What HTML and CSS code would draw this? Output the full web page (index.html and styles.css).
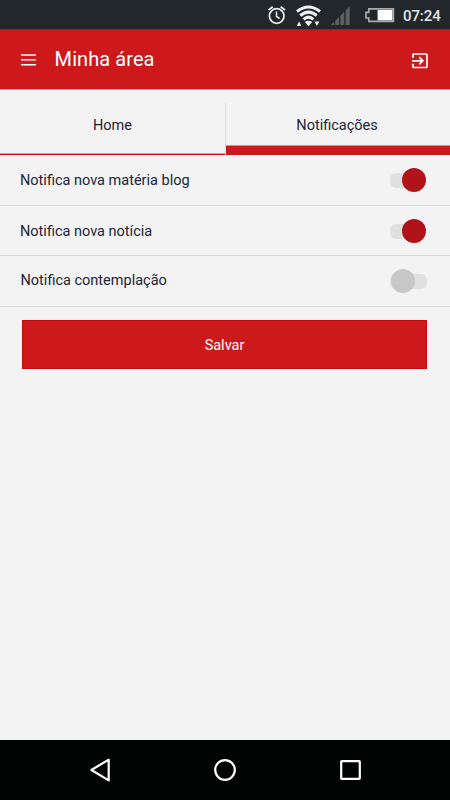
FILE: index.html
```html
<!DOCTYPE html>
<html lang="pt-BR">
<head>
<meta charset="utf-8">
<title>Minha área</title>
<link rel="stylesheet" href="styles.css">
</head>
<body>
<div class="screen">
  <div class="status">
    <svg class="alarm" width="18" height="20" viewBox="0 0 18 20" fill="none" stroke="#e9eaea">
      <circle cx="8.7" cy="11" r="7.3" stroke-width="1.8"/>
      <path d="M8.5 6.5v5l3.2 2" stroke-width="1.5"/>
      <path d="M.5 5L4.8 1.8M17 5L12.7 1.8" stroke-width="1.8"/>
    </svg>
    <svg class="wifi" width="26" height="22" viewBox="0 0 26 22">
      <g fill="none" stroke="#f0f0f0" stroke-width="3.1">
        <path d="M1 6.4Q12.5-2.4 24 6.4"/>
        <path d="M4.3 10.5Q12.5 3.7 20.7 10.5"/>
        <path d="M7.6 14.3Q12.5 10 17.4 14.3"/>
      </g>
      <path d="M8.8 17Q12.5 14.4 16.2 17L12.5 21.2ZM.8 21L3.1 16.4 5.4 21ZM18.5 16.4H23.3L20.9 21Z" fill="#f0f0f0"/>
    </svg>
    <svg class="signal" width="19" height="20" viewBox="0 0 19 20" fill="#5b6062">
      <path d="M0 19L3.3 15.7V19ZM4.3 14.7L8 11V19H4.3ZM9.3 9.7L13.2 5.8V19H9.3ZM14.7 4.3L18.7.3V19H14.7Z"/>
    </svg>
    <svg class="battery" width="30" height="15" viewBox="0 0 30 15">
      <path d="M3.8.9H28.4V13.4H3.8V10H1V4.3H3.8Z" fill="none" stroke="#a9abac" stroke-width="1.7"/>
      <path d="M12.6 2h14.8v10.3H12.6z" fill="#fff"/>
    </svg>
    <span class="time">07:24</span>
  </div>
  <header class="header">
    <svg class="menu" width="16" height="12" viewBox="0 0 16 12" stroke="#fff" stroke-width="1.4"><path d="M0 1h15M0 5.9h15M0 10.8h15"/></svg>
    <h1>Minha área</h1>
    <svg class="exit" width="16" height="16" viewBox="0 0 16 16" fill="none" stroke="#fff" stroke-width="1.7">
      <path d="M.9 4.9V2Q.9 1 1.9 1H14Q15 1 15 2V13.5Q15 14.5 14 14.5H1.9Q.9 14.5.9 13.5V10.8"/>
      <path d="M0 7.8H10.8M7.2 4.2L10.9 7.8 7.2 11.4"/>
    </svg>
  </header>
  <nav class="tabs">
    <div class="tab"><span>Home</span></div>
    <div class="tab active"><span>Notificações</span></div>
  </nav>
  <main>
    <div class="row first"><span>Notifica nova matéria blog</span><div class="switch on"><i></i></div></div>
    <div class="row second"><span>Notifica nova notícia</span><div class="switch on"><i></i></div></div>
    <div class="row last"><span>Notifica contemplação</span><div class="switch"><i></i></div></div>
    <button class="save" type="button">Salvar</button>
  </main>
  <footer class="navbar">
    <svg width="20" height="24" viewBox="0 0 20 24"><path d="M18.7 1.6V22.4L1.4 12Z"/></svg>
    <svg width="22" height="22" viewBox="0 0 22 22"><circle cx="11" cy="11" r="9.8"/></svg>
    <svg width="21" height="20" viewBox="0 0 21 20"><rect x="1.2" y="1.2" width="18.6" height="17.6" rx=".6"/></svg>
  </footer>
</div>
</body>
</html>
```
FILE: styles.css
```css
* { box-sizing: border-box; }

body {
  margin: 0;
  font-family: Roboto, sans-serif;
  color: #202538;
  background: #f3f3f3;
}

svg { display: block; flex: none; }

.screen {
  width: 450px;
  height: 800px;
  display: flex;
  flex-direction: column;
}

.status {
  height: 29px;
  flex: none;
  display: flex;
  align-items: flex-start;
  padding: 5px 0 0 268px;
  background: #22272b;
}
.wifi { margin-left: 10px; }
.signal { margin: 1px 0 0 9px; }
.battery { margin: 3px 0 0 15px; }
.time {
  margin: 2px 0 0 8px;
  font-size: 15px;
  line-height: 18px;
  font-weight: 500;
  letter-spacing: -0.1px;
  color: #e4e5e5;
}

.header {
  height: 61px;
  flex: none;
  display: flex;
  align-items: center;
  padding: 0 22px 0 21px;
  background: #cd191c;
  border-top: 1px solid #a51b1e;
  border-bottom: 1px solid #e59a9b;
}
.menu { margin-top: 1px; }
.exit { margin-top: 3px; }
.header h1 {
  margin: 0 auto 2px 17.6px;
  font-size: 20px;
  line-height: 24px;
  font-weight: 400;
  letter-spacing: 0.08px;
  color: #fff;
}

.tabs {
  height: 65px;
  flex: none;
  display: flex;
}
.tab {
  flex: 1;
  display: flex;
  flex-direction: column;
  padding-top: 13px;
  font-size: 14.5px;
  text-align: center;
  background: linear-gradient(#e99495 50%, #c90d10 50%) no-repeat bottom / 100% 2px;
}
.tab span {
  height: 43px;
  line-height: 45px;
}
.tab.active { background: linear-gradient(#e0898b 1px, #cd191c 1px) no-repeat 1px 100% / 100% 10px; }
.tab.active span {
  height: 52px;
  padding-right: 2px;
  border-left: 1px solid #dedede;
}

main { flex: 1; }
.row {
  height: 50px;
  display: flex;
  align-items: center;
  justify-content: space-between;
  padding: 1px 22px 0 20px;
  border-bottom: 1px solid #d8d8d8;
  font-size: 14.5px;
}
.row.first {
  height: 51px;
  padding-top: 1px;
}
.row.first .switch { margin-bottom: 1px; }
.row.second { padding-top: 2px; }
.row.second .switch { margin-bottom: 1px; }
.row.last {
  height: 51px;
  padding: 0 22px 0 20.5px;
}
.row span { line-height: 18px; }

.switch {
  position: relative;
  width: 38px;
  height: 24px;
  display: flex;
  align-items: center;
}
.switch::before {
  content: "";
  position: absolute;
  left: 0;
  top: 4.5px;
  width: 37px;
  height: 15px;
  border-radius: 6px;
  background: #e0e0e0;
}
.switch i {
  position: relative;
  width: 24px;
  height: 24px;
  margin-left: 1px;
  border-radius: 50%;
  background: #c7c7c7;
}
.switch.on { justify-content: flex-end; }
.switch.on i {
  margin-right: 1.6px;
  background: #b01418;
}
.switch.on::before { width: 34px; }

.save {
  display: block;
  width: 405px;
  height: 49px;
  margin: 13px 0 0 22px;
  padding: 2px 0 0;
  border: 1px solid #c50a0e;
  background: #cd191c;
  color: #fff;
  font: 400 14.5px/18px Roboto, sans-serif;
}

.navbar {
  height: 60px;
  flex: none;
  display: flex;
  align-items: center;
  justify-content: space-between;
  padding: 0 89px 0 90px;
  background: #020303;
}
.navbar svg {
  fill: none;
  stroke: #fff;
  stroke-width: 2.2;
  stroke-linejoin: round;
}
```
